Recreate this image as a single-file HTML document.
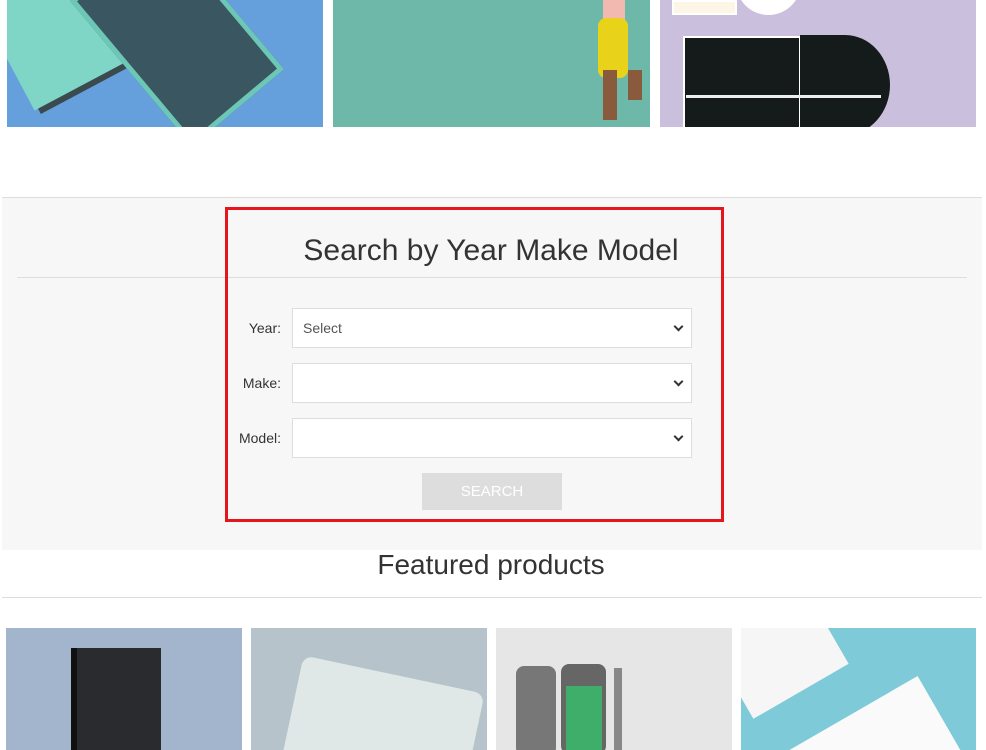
<!DOCTYPE html>
<html><head><meta charset="utf-8"><style>
*{margin:0;padding:0;box-sizing:border-box}
html,body{width:986px;height:750px;overflow:hidden}
body{background:#fff;font-family:"Liberation Sans",Arial,sans-serif;position:relative}
.a{position:absolute}
.sel{position:absolute;left:292px;width:400px;height:40px;background:#fff;border:1px solid #ddd;font-size:14px;color:#555;padding:11px 10px}
.sel:after{content:"";position:absolute;right:9px;top:14px;width:5px;height:5px;border-right:2px solid #333;border-bottom:2px solid #333;transform:rotate(45deg)}
.lbl{position:absolute;width:80px;left:201px;text-align:right;font-size:14px;color:#333}
</style></head><body>
<div class="a" style="left:7px;top:0;width:316px;height:127px;background:#66a0dc;overflow:hidden">
 <div class="a" style="left:-10px;top:-40px;width:120px;height:130px;background:#7fd6c6;transform:rotate(-28deg);box-shadow:4px 6px 0 #3b4a4f"></div>
 <div class="a" style="left:110px;top:-60px;width:120px;height:190px;background:#3a5660;transform:rotate(-40deg);border:5px solid #6dc7b6"></div>
</div>
<div class="a" style="left:333px;top:0;width:317px;height:127px;background:#6eb8a9;overflow:hidden">
 <div class="a" style="left:270px;top:0;width:22px;height:20px;background:#f2b9b0"></div>
 <div class="a" style="left:265px;top:18px;width:30px;height:60px;background:#e8d21a;border-radius:8px"></div>
 <div class="a" style="left:270px;top:70px;width:14px;height:50px;background:#8a5a3c"></div>
 <div class="a" style="left:295px;top:70px;width:14px;height:30px;background:#8a5a3c"></div>
</div>
<div class="a" style="left:660px;top:0;width:316px;height:127px;background:#cabfdd;overflow:hidden">
 <div class="a" style="left:12px;top:0;width:65px;height:15px;background:#fdf5e6;border:2px solid #fff"></div>
 <div class="a" style="left:76px;top:-50px;width:65px;height:65px;background:#fff;border-radius:50%"></div>
 <div class="a" style="left:23px;top:36px;width:118px;height:95px;background:#151a1a;border:2px solid #fff"></div>
 <div class="a" style="left:140px;top:35px;width:90px;height:100px;background:#151a1a;border-radius:0 50% 50% 0/0 50% 50% 0"></div>
 <div class="a" style="left:26px;top:95px;width:195px;height:3px;background:#eee"></div>
</div>
<div class="a" style="left:2px;top:197px;width:980px;height:353px;background:#f7f7f7;border-top:1px solid #ddd"></div>
<div class="a" style="left:17px;top:277px;width:950px;height:1px;background:#ddd"></div>
<div class="a" style="left:225px;top:207px;width:499px;height:315px;border:3px solid #e4161b"></div>
<div class="a" style="left:225px;top:234px;width:532px;text-align:center;font-size:30px;color:#333">Search by Year Make Model</div>
<div class="lbl" style="top:320px">Year:</div>
<div class="lbl" style="top:375px">Make:</div>
<div class="lbl" style="top:430px">Model:</div>
<div class="sel" style="top:308px">Select</div>
<div class="sel" style="top:363px"></div>
<div class="sel" style="top:418px"></div>
<div class="a" style="left:422px;top:473px;width:140px;height:37px;background:#ddd;color:#fff;font-size:15px;text-align:center;line-height:37px">SEARCH</div>
<div class="a" style="left:0;top:549px;width:982px;text-align:center;font-size:28px;color:#333">Featured products</div>
<div class="a" style="left:2px;top:597px;width:980px;height:1px;background:#ddd"></div>
<div class="a" style="left:6px;top:628px;width:236px;height:122px;background:#a2b5cc;overflow:hidden">
 <div class="a" style="left:65px;top:20px;width:90px;height:110px;background:#2a2b2e;border-left:6px solid #111"></div>
</div>
<div class="a" style="left:251px;top:628px;width:236px;height:122px;background:#b6c3cb;overflow:hidden">
 <div class="a" style="left:35px;top:45px;width:185px;height:150px;background:#dfe8e6;border-radius:10px;transform:rotate(12deg)"></div>
</div>
<div class="a" style="left:496px;top:628px;width:236px;height:122px;background:#e6e6e6;overflow:hidden">
 <div class="a" style="left:20px;top:38px;width:40px;height:90px;background:#777;border-radius:8px"></div>
 <div class="a" style="left:65px;top:36px;width:45px;height:90px;background:#666;border-radius:8px"></div>
 <div class="a" style="left:70px;top:58px;width:36px;height:70px;background:#3fae6a"></div>
 <div class="a" style="left:118px;top:40px;width:8px;height:90px;background:#888"></div>
</div>
<div class="a" style="left:741px;top:628px;width:235px;height:122px;background:#7ecad8;overflow:hidden">
 <div class="a" style="left:-20px;top:-30px;width:110px;height:100px;background:#f6f6f6;transform:rotate(-30deg)"></div>
 <div class="a" style="left:20px;top:90px;width:200px;height:120px;background:#fafafa;transform:rotate(-30deg)"></div>
</div>
</body></html>
